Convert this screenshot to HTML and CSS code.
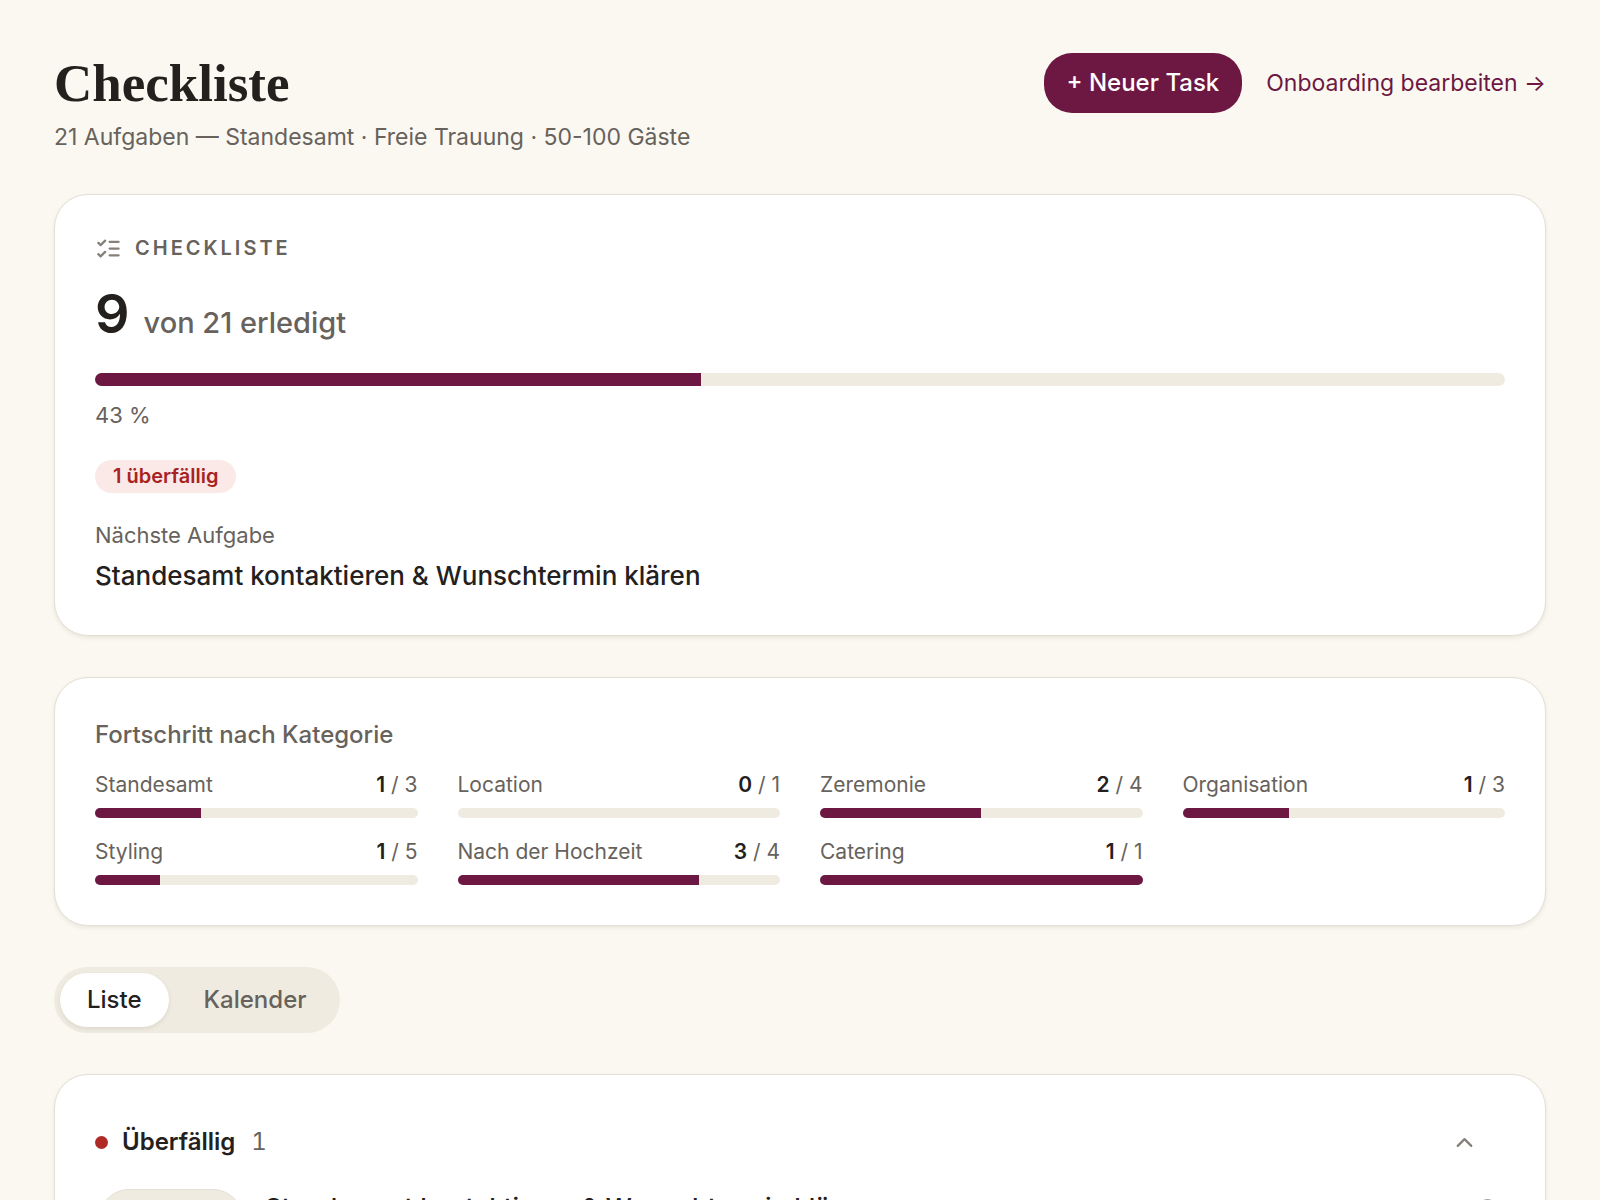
FILE: index.html
```html
<!DOCTYPE html>
<html lang="de">
<head>
<meta charset="utf-8">
<meta name="viewport" content="width=device-width, initial-scale=1">
<title>Checkliste</title>
<link rel="stylesheet" href="styles.css">
</head>
<body>
<main class="page">
  <header class="page-header">
    <div class="page-heading">
      <h1 class="page-title">Checkliste</h1>
      <p class="page-subtitle">21 Aufgaben — Standesamt · Freie Trauung · 50-100 Gäste</p>
    </div>
    <div class="page-actions">
      <button class="button-primary" type="button">+ Neuer Task</button>
      <a class="link" href="#onboarding">Onboarding bearbeiten →</a>
    </div>
  </header>

  <section class="card summary">
    <h2 class="eyebrow">
      <svg class="icon" viewBox="0 0 24 24" aria-hidden="true"><path d="m3 17 2 2 4-4M3 7l2 2 4-4M13 6h8M13 12h8M13 18h8"/></svg>
      Checkliste
    </h2>
    <p class="summary-count"><strong class="summary-number">9</strong><span>von 21 erledigt</span></p>
    <div class="bar bar-large"><div class="bar-fill" style="width:43%"></div></div>
    <p class="summary-percent">43 %</p>
    <p class="badge">1 überfällig</p>
    <p class="next-label">Nächste Aufgabe</p>
    <p class="next-task">Standesamt kontaktieren &amp; Wunschtermin klären</p>
  </section>

  <section class="card categories">
    <h2 class="categories-title">Fortschritt nach Kategorie</h2>
    <ul class="category-grid">
      <li class="category"><div class="category-row"><span>Standesamt</span><span><b class="done">1</b> / 3</span></div><div class="bar"><div class="bar-fill" style="width:33%"></div></div></li>
      <li class="category"><div class="category-row"><span>Location</span><span><b class="done">0</b> / 1</span></div><div class="bar"><div class="bar-fill" style="width:0%"></div></div></li>
      <li class="category"><div class="category-row"><span>Zeremonie</span><span><b class="done">2</b> / 4</span></div><div class="bar"><div class="bar-fill" style="width:50%"></div></div></li>
      <li class="category"><div class="category-row"><span>Organisation</span><span><b class="done">1</b> / 3</span></div><div class="bar"><div class="bar-fill" style="width:33%"></div></div></li>
      <li class="category"><div class="category-row"><span>Styling</span><span><b class="done">1</b> / 5</span></div><div class="bar"><div class="bar-fill" style="width:20%"></div></div></li>
      <li class="category"><div class="category-row"><span>Nach der Hochzeit</span><span><b class="done">3</b> / 4</span></div><div class="bar"><div class="bar-fill" style="width:75%"></div></div></li>
      <li class="category"><div class="category-row"><span>Catering</span><span><b class="done">1</b> / 1</span></div><div class="bar"><div class="bar-fill" style="width:100%"></div></div></li>
    </ul>
  </section>

  <div class="view-switch">
    <button class="view-option is-active" type="button" aria-pressed="true">Liste</button>
    <button class="view-option" type="button" aria-pressed="false">Kalender</button>
  </div>

  <section class="card tasks">
    <h2 class="group-heading">
      <button class="group-toggle" type="button" aria-expanded="true">
        <span class="dot"></span>
        <span class="group-name">Überfällig</span>
        <span class="group-count">1</span>
        <svg class="icon group-chevron" viewBox="0 0 24 24" aria-hidden="true"><path d="m18 15-6-6-6 6"/></svg>
      </button>
    </h2>
    <div class="task">
      <button class="task-status" type="button" aria-label="Status"></button>
      <p class="task-title">Standesamt kontaktieren &amp; Wunschtermin klären</p>
      <button class="task-menu" type="button" aria-label="Mehr"><svg class="icon" viewBox="0 0 24 24" aria-hidden="true"><circle cx="12" cy="12" r="9"/></svg></button>
    </div>
  </section>
</main>
</body>
</html>
```
FILE: styles.css
```css
* { box-sizing: border-box; }

body {
  margin: 0;
  height: 100vh;
  overflow: hidden;
  background: #fbf8f1;
  color: #23201e;
  font-family: Inter, "Liberation Sans", sans-serif;
  font-size: 24px;
  line-height: 32px;
}

h1, h2, p, ul { margin: 0; padding: 0; font-weight: inherit; font-size: inherit; }
ul { list-style: none; }

button {
  font: inherit;
  color: inherit;
  background: none;
  border: 0;
  padding: 0;
  cursor: pointer;
}

.page {
  display: flex;
  flex-direction: column;
  gap: 41px;
  padding: 53px 54px;
}

.page-header {
  display: flex;
  justify-content: space-between;
  align-items: flex-start;
}

.page-title {
  font-family: "Liberation Serif", serif;
  font-size: 53px;
  font-weight: 700;
  line-height: 60px;
}

.page-subtitle { margin-top: 8px; font-size: 23px; color: #67625c; }

.page-actions { display: flex; align-items: center; gap: 24px; }

.button-primary {
  height: 60px;
  padding: 0 23px;
  border-radius: 28px;
  background: #6d1842;
  color: #fff;
  font-weight: 500;
}

.link { color: #6d1842; font-size: 23px; text-decoration: none; }

.card {
  padding: 40px;
  border: 1px solid #e3dfd5;
  border-radius: 34px;
  background: #fff;
  box-shadow: 0 2px 4px rgba(60, 50, 30, .09);
}

.icon {
  width: 27px;
  height: 27px;
  fill: none;
  stroke: #85807a;
  stroke-width: 2;
  stroke-linecap: round;
  stroke-linejoin: round;
}

.eyebrow {
  display: flex;
  align-items: center;
  gap: 13px;
  line-height: 27px;
  font-size: 20px;
  font-weight: 600;
  letter-spacing: 3px;
  text-transform: uppercase;
  color: #67625c;
}

.summary-count {
  display: flex;
  align-items: baseline;
  gap: 14px;
  margin-top: 25px;
  line-height: 54px;
  font-size: 29px;
  font-weight: 500;
  color: #67625c;
}

.summary-number { font-size: 54px; font-weight: 600; color: #23201e; }

.bar {
  height: 10px;
  border-radius: 7px;
  background: #f0ebe1;
  overflow: hidden;
}

.bar-large { height: 13px; margin-top: 23px; }
.bar-fill { height: 100%; background: #6d1842; }

.summary-percent { margin-top: 13px; font-size: 22px; color: #67625c; }

.badge {
  width: fit-content;
  margin-top: 29px;
  padding: 0 18px;
  border-radius: 17px;
  background: #fbe9e8;
  color: #a8231f;
  font-size: 20px;
  font-weight: 600;
  line-height: 33px;
}

.next-label { margin-top: 26px; font-size: 22px; color: #67625c; }
.next-task { margin-top: 5px; font-size: 26px; font-weight: 500; line-height: 39px; }

.categories-title { font-weight: 500; line-height: 34px; color: #67625c; }

.category-grid {
  display: grid;
  grid-template-columns: repeat(4, 1fr);
  gap: 20px 40px;
  margin-top: 19px;
}

.category-row {
  display: flex;
  justify-content: space-between;
  margin-bottom: 10px;
  font-size: 21px;
  line-height: 27px;
  color: #67625c;
}

.done { font-weight: 600; color: #23201e; }

.view-switch {
  display: flex;
  gap: 8px;
  width: fit-content;
  padding: 6px;
  border-radius: 33px;
  background: #f0ebe1;
}

.view-option {
  height: 54px;
  padding: 0 27px;
  border-radius: 27px;
  font-weight: 500;
  color: #67625c;
}

.view-option.is-active {
  background: #fff;
  color: #23201e;
  box-shadow: 0 2px 4px rgba(60, 50, 30, .1);
}

.group-toggle {
  display: flex;
  align-items: center;
  width: 100%;
  padding: 11px 27px 11px 0;
}

.dot {
  width: 13px;
  height: 13px;
  margin-right: 14px;
  border-radius: 50%;
  background: #b02a25;
}

.group-name { font-weight: 600; }
.group-count { margin-left: 16px; color: #67625c; font-variant-numeric: tabular-nums; }
.group-chevron { margin-left: auto; }

.task {
  display: flex;
  align-items: flex-start;
  gap: 22px;
  margin-top: 20px;
  padding-left: 4px;
}

.task-status {
  width: 144px;
  height: 60px;
  border: 1px solid #e3dfd5;
  border-radius: 30px;
  background: #f0ebe1;
}

.task-title { flex: 1; padding-top: 3px; font-size: 26px; font-weight: 500; }
.task-menu { padding: 8px 4px; }
```
